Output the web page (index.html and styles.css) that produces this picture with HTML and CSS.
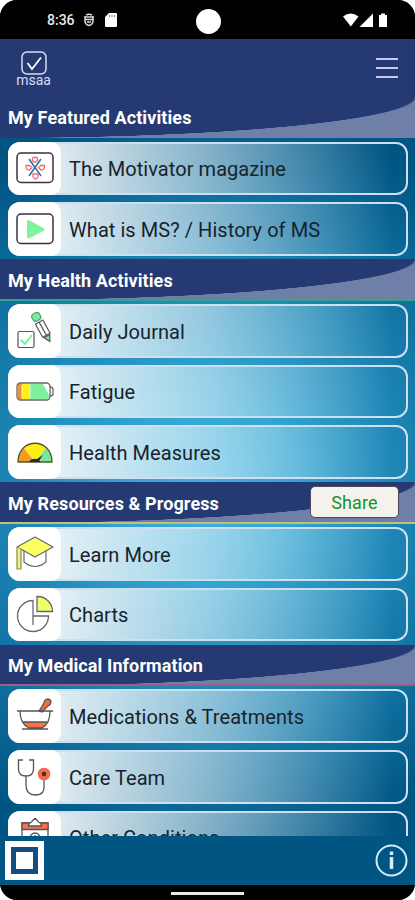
FILE: index.html
```
<!DOCTYPE html>
<html lang="en">
<head>
    <meta charset="UTF-8">
    <meta name="viewport" content="width=device-width, initial-scale=1.0">
    <title>My MS Manager</title>
    <link rel="stylesheet" href="styles.css">
</head>
<body>
    <div class="phone">
        <div class="status-bar">
            <span class="time">8:36</span>
            <svg class="shield" width="12" height="14" viewBox="0 0 12 14" fill="none" stroke="#ddd" stroke-width="1.5">
                <path d="M3 2.2Q6 .2 9 2.2M1.2 4h9.6M1.2 6.5h9.6M2 3v5c0 2.500 2 4 4 4.500c2-.5 4-2 4-4.500V3M4 9h4"/>
            </svg>
            <svg class="sd-card" width="12" height="14" viewBox="0 0 12 14">
                <path d="M4 0h7q1 0 1 1v12q0 1-1 1H1q-1 0-1-1V4z" fill="#fff"/>
                <path d="M4.500 2v2M7 2v2M9.500 2v2" stroke="#777"/>
            </svg>
            <div class="camera"></div>
            <svg class="signals" width="45" height="15" viewBox="0 0 45 15" fill="#fff">
                <path d="M0 3.500Q7.800-2.500 15.500 3.500L7.800 13.500z"/>
                <path d="M16.500 14L30 .5V14z"/>
                <path d="M36 2h2V.5h4V2h2v12h-8z"/>
            </svg>
        </div>

        <div class="navbar">
            <div class="logo">
                <svg width="26" height="24" viewBox="0 0 26 24" fill="none" stroke="#d9dcf5">
                    <rect x="1" y="1" width="24" height="22" rx="5" stroke-width="1.500"/>
                    <path d="M6.500 12l4.500 6L20 6.500" stroke="#fff" stroke-width="1.800"/>
                </svg>
                <span>msaa</span>
            </div>
            <div class="menu-icon"><i></i><i></i><i></i></div>
        </div>

        <div class="content">
            <div class="section-header plain">
                <h2>My Featured Activities</h2>
            </div>
            <div class="item">
                <div class="icon">
                    <svg width="38" height="38" viewBox="0 0 38 38" fill="none">
                        <rect x="1" y="4" width="36" height="29.500" rx="4" stroke="#39323c" stroke-width="1.500"/>
                        <path d="M13 10l12 17M25 10L13 27" stroke="#2f6f9f" stroke-width="1.500"/>
                        <g stroke="#f0686e" stroke-width="1.300">
                            <path d="M17 8.500h4q2 3-2 5q-4-2-2-5zM17 25h5v3q-2.500 4-5 0zM10 16.500h3.500l2.500 2l-2.500 2.500q-4 0-3.500-4.500zM28.500 16.500H25l-2.500 2l2.500 2.500q4 0 3.500-4.500z"/>
                        </g>
                    </svg>
                </div>
                <span class="label">The Motivator magazine</span>
            </div>
            <div class="item">
                <div class="icon">
                    <svg width="38" height="38" viewBox="0 0 38 38">
                        <rect x="1" y="4" width="36" height="29.500" rx="4" fill="none" stroke="#39323c" stroke-width="1.500"/>
                        <path d="M12.500 11.500v15.500L27 19.500z" fill="#7ff59b" stroke="#7ff59b" stroke-width="3" stroke-linejoin="round"/>
                    </svg>
                </div>
                <span class="label">What is MS? / History of MS</span>
            </div>

            <div class="section-header green">
                <h2>My Health Activities</h2>
            </div>
            <div class="item">
                <div class="icon">
                    <svg width="38" height="38" viewBox="0 0 38 38" fill="none" stroke="#555" stroke-width="1.200">
                        <rect x="2" y="19.500" width="16" height="16" rx="1.500"/>
                        <path d="M5 28l4 4l7-9" stroke="#75ed97" stroke-width="1.800"/>
                        <g transform="rotate(-29 20 5)">
                            <rect x="16" y="1" width="8.500" height="8" rx="3" fill="#75ed97" stroke="#5a9a6c"/>
                            <path d="M16 11h8.500v15H16zM20.200 11v15"/>
                            <path d="M17 27h6.500l-3.200 6z" fill="#75ed97"/>
                        </g>
                    </svg>
                </div>
                <span class="label">Daily Journal</span>
            </div>
            <div class="item">
                <div class="icon">
                    <svg width="38" height="38" viewBox="0 0 38 38">
                        <rect x="2" y="12" width="4" height="15" fill="#f29132"/>
                        <rect x="6" y="12" width="8" height="15" fill="#ffed16"/>
                        <path d="M14 12h13l6 11v4H14z" fill="#81ef9d"/>
                        <g fill="none" stroke="#666" stroke-width="1.300">
                            <rect x="1" y="11" width="33" height="17" rx="3.500"/>
                            <path d="M34 15q3 0 3 2v5q0 2-3 2"/>
                            <path d="M6 13v13M14 13v13" stroke="#fff" stroke-width=".8"/>
                        </g>
                    </svg>
                </div>
                <span class="label">Fatigue</span>
            </div>
            <div class="item">
                <div class="icon">
                    <svg width="38" height="38" viewBox="0 0 38 38">
                        <path d="M19 29H2Q2 20 8 15z" fill="#f79a22"/>
                        <path d="M19 29L8 15Q19 5 30 15z" fill="#ffee14"/>
                        <path d="M19 29L30 15Q36 20 36 29z" fill="#75e89b"/>
                        <path d="M2 29C2 4 36 4 36 29z" fill="none" stroke="#54552d" stroke-width="1.300"/>
                        <path d="M13 29q2-4 8-3l6-4l-3.500 5l.5 2z" fill="#222c32"/>
                    </svg>
                </div>
                <span class="label">Health Measures</span>
            </div>

            <div class="section-header yellow">
                <h2>My Resources &amp; Progress</h2>
                <button class="share">Share</button>
            </div>
            <div class="item">
                <div class="icon">
                    <svg width="38" height="38" viewBox="0 0 38 38" stroke="#66676a" stroke-width="1.200" stroke-linejoin="round">
                        <path d="M8 16v11q11 9 22 0V16" fill="#fff"/>
                        <path d="M1 12L19 2l18 10l-18 10z" fill="#faff62"/>
                        <path d="M1 12v22h4V14.500" fill="#eef277" stroke="#888a55"/>
                    </svg>
                </div>
                <span class="label">Learn More</span>
            </div>
            <div class="item">
                <div class="icon">
                    <svg width="38" height="38" viewBox="0 0 38 38" fill="none" stroke="#66676a" stroke-width="1.300">
                        <path d="M17 5.500A15.500 15.500 0 1 0 32.500 21H17zM17 21v9"/>
                        <path d="M21 1.500A15 15 0 0 1 36.500 16.500H21z" fill="#efff68"/>
                    </svg>
                </div>
                <span class="label">Charts</span>
            </div>

            <div class="section-header red">
                <h2>My Medical Information</h2>
            </div>
            <div class="item">
                <div class="icon">
                    <svg width="38" height="38" viewBox="0 0 38 38" fill="none" stroke="#55565a" stroke-width="1.300">
                        <path d="M23 14L28 6q0-3 3-4q3 0 4 2q0 4-3 5l-6 6z" fill="#f46b45"/>
                        <path d="M7.500 25h24q-2 5-6 6H13q-4-1-5.500-6z" fill="#fa7048" stroke="none"/>
                        <path d="M1 14h36M4 14q0 13 9 17h13q8-4 8-17M7 25h24M6 32h26"/>
                    </svg>
                </div>
                <span class="label">Medications &amp; Treatments</span>
            </div>
            <div class="item">
                <div class="icon">
                    <svg width="38" height="38" viewBox="0 0 38 38" fill="none" stroke="#555" stroke-width="1.300">
                        <path d="M7 2H2.500v9q0 7 7.500 7t7.500-7V2H13M10 18v9q0 10 9.500 10T28 27v-5"/>
                        <circle cx="28" cy="16" r="6" fill="#4d2926" stroke="none"/>
                        <circle cx="28" cy="16" r="4.300" stroke="#f46c4c" stroke-width="4"/>
                    </svg>
                </div>
                <span class="label">Care Team</span>
            </div>
            <div class="item">
                <div class="icon">
                    <svg width="38" height="38" viewBox="0 0 38 38" fill="none" stroke="#55565a" stroke-width="1.300">
                        <path d="M6 5h26v31H6z"/>
                        <path d="M6 5h26v6.500H6z" fill="#fa7048"/>
                        <path d="M12.500 8q0-3 3-4l3.500-4l3.500 4q3 1 3 4z" fill="#fff"/>
                        <circle cx="19" cy="20" r="5"/>
                        <path d="M19 17v6M16 20h6"/>
                    </svg>
                </div>
                <span class="label">Other Conditions</span>
            </div>
        </div>

        <div class="footer">
            <div class="stop"><div class="stop-inner"></div></div>
            <svg class="info" width="33" height="33" viewBox="0 0 33 33" fill="none" stroke="#d5edfa">
                <circle cx="16.500" cy="16.500" r="15" stroke-width="2"/>
                <path d="M16.500 13v12M16.500 7.500v3.500" stroke-width="3.500"/>
            </svg>
        </div>
        <div class="gesture-bar"><div class="handle"></div></div>
    </div>
</body>
</html>
```
FILE: styles.css
```
* {
    box-sizing: border-box;
}
body {
    margin: 0;
    background: #fff;
    font-family: Roboto, "Liberation Sans", sans-serif;
}
.phone {
    width: 415px;
    height: 900px;
    display: flex;
    flex-direction: column;
    overflow: hidden;
    border-radius: 17px;
    background: radial-gradient(ellipse 350px 385px at 207px 487px, #3cb2df 0%, #32a5d2 25%, #1478a8 68%, #005583 100%);
}

/* status bar */
.status-bar {
    flex: none;
    height: 39px;
    display: flex;
    align-items: center;
    padding: 1px 27px 0 47px;
    background: #000;
    color: #e8e8e8;
}
.time {
    width: 36px;
    font-size: 14px;
    font-weight: 500;
}
.sd-card {
    margin-left: 10px;
}
.camera {
    width: 25px;
    height: 25px;
    margin: 3px 0 0 78.500px;
    border-radius: 50%;
    background: #fff;
}
.signals {
    margin-left: auto;
}

/* top navigation */
.navbar {
    flex: none;
    height: 58px;
    display: flex;
    justify-content: space-between;
    padding: 12px 17px 0 16px;
    background: #253a73;
}
.logo {
    width: 35px;
    display: flex;
    flex-direction: column;
    align-items: center;
    color: #d9dcf5;
}
.logo span {
    margin-top: -1px;
    font-size: 14px;
    line-height: 12px;
}
.menu-icon {
    width: 22px;
    height: 20px;
    margin-top: 7px;
    display: flex;
    flex-direction: column;
    justify-content: space-between;
}
.menu-icon i {
    height: 2px;
    background: #c9c8ef;
}

/* scrolling list */
.content {
    flex: 1;
    min-height: 0;
    overflow: hidden;
}
.section-header {
    height: 41.2px;
    display: flex;
    align-items: center;
    justify-content: space-between;
    padding: 0 16px 0 8px;
    border-bottom: 2.500px solid;
    background: radial-gradient(ellipse 417px 41px at 0 0, #253a73 99.2%, #6e80a7 100%);
}
.section-header h2 {
    margin: 3px 0 0;
    color: #fff;
    font-size: 18px;
    font-weight: 700;
    letter-spacing: 0.1px;
}
.plain {
    border-bottom: 0;
}
.section-header.plain h2 {
    margin-top: -1px;
}
.green {
    border-color: #2da887;
}
.yellow {
    border-color: #c6be7d;
}
.red {
    border-color: #a85a7c;
}
.share {
    width: 89px;
    height: 32px;
    margin-top: 1px;
    padding: 0;
    border: 1px solid #4b4a5d;
    border-radius: 5px;
    background: #f5f2ee;
    color: #169327;
    font-family: inherit;
    font-size: 18px;
    letter-spacing: 0.1px;
}
.item {
    height: 53.600px;
    margin: 3.500px 7px 7px 8px;
    display: flex;
    align-items: center;
    border: 2px solid #cce0f0;
    border-radius: 12px;
    background: linear-gradient(to right, rgba(255, 255, 255, 0.88) 12%, rgba(255, 255, 255, 0.5) 50%, rgba(255, 255, 255, 0) 96%) border-box;
}
.item + .item {
    margin-top: 0;
}
.item:has(+ .section-header) {
    margin-bottom: 3.500px;
}
.icon {
    width: 53px;
    height: 53.600px;
    flex: none;
    display: flex;
    align-items: center;
    justify-content: center;
    margin-left: -2px;
    border-radius: 12px 10px 10px 12px;
    background: #fff;
}
.label {
    margin: 2px 0 0 8px;
    color: #17232c;
    font-size: 20px;
    letter-spacing: 0.06px;
    white-space: nowrap;
}

/* bottom bar */
.footer {
    flex: none;
    height: 49px;
    display: flex;
    align-items: center;
    justify-content: space-between;
    padding: 0 7px 0 5px;
    background: #005583;
}
.stop {
    width: 39px;
    height: 39px;
    padding: 6px;
    background: #fff;
}
.stop-inner {
    width: 27px;
    height: 27px;
    border: 5px solid #144e80;
}
.gesture-bar {
    flex: none;
    height: 15px;
    display: flex;
    justify-content: center;
    padding-top: 7px;
    background: #000;
}
.handle {
    width: 73px;
    height: 3px;
    background: #e8e8e8;
}
```
